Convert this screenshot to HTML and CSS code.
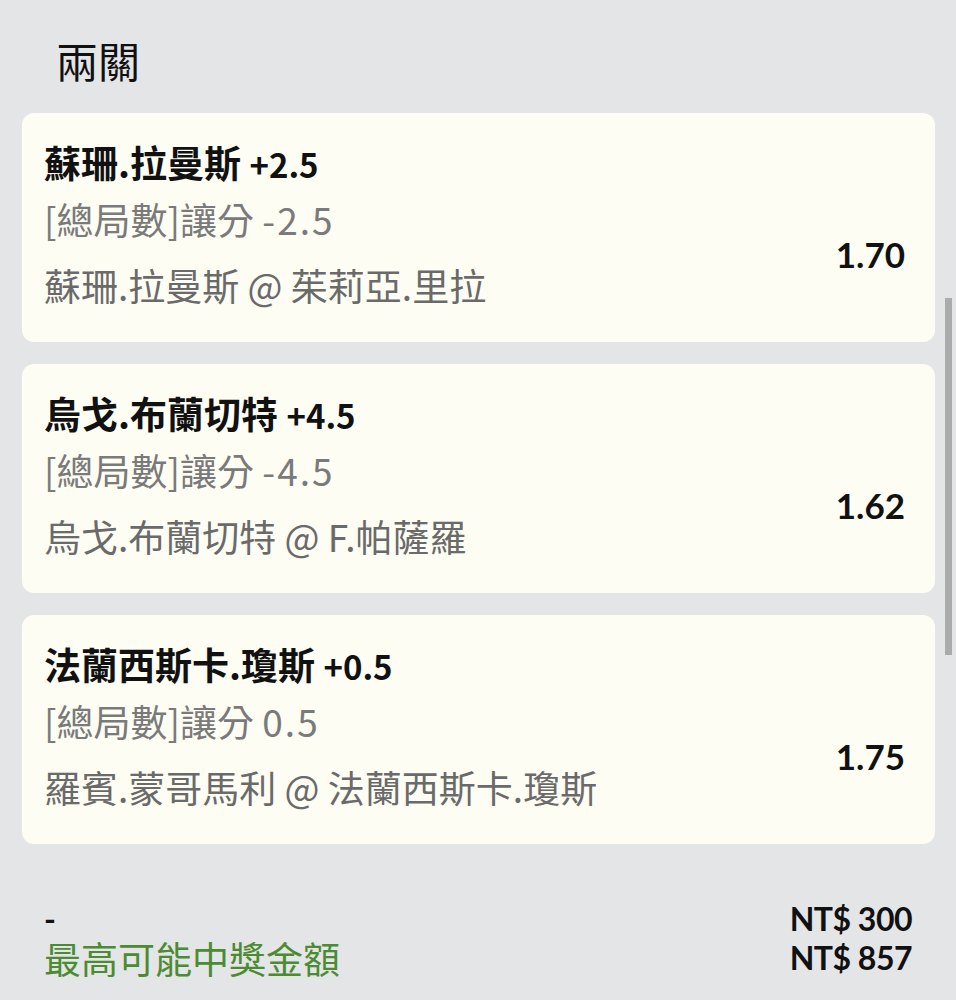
FILE: index.html
```html
<!DOCTYPE html>
<html lang="zh-Hant">
<head>
    <meta charset="UTF-8">
    <meta name="viewport" content="width=device-width, initial-scale=1.0">
    <link rel="stylesheet" href="styles.css">
    <title>兩關</title>
</head>
<body>
    <div class="page">
        <h1 class="page-title">兩關</h1>

        <div class="bet-list">
            <div class="bet-card">
                <div class="bet-info">
                    <div class="bet-pick">蘇珊.拉曼斯 <span class="line">+2.5</span></div>
                    <div class="bet-market">[總局數]讓分 <span class="line">-2.5</span></div>
                    <div class="bet-match">蘇珊.拉曼斯 @ 茱莉亞.里拉</div>
                </div>
                <div class="bet-odds">1.70</div>
            </div>
            <div class="bet-card">
                <div class="bet-info">
                    <div class="bet-pick">烏戈.布蘭切特 <span class="line">+4.5</span></div>
                    <div class="bet-market">[總局數]讓分 <span class="line">-4.5</span></div>
                    <div class="bet-match">烏戈.布蘭切特 @ F.帕薩羅</div>
                </div>
                <div class="bet-odds">1.62</div>
            </div>
            <div class="bet-card">
                <div class="bet-info">
                    <div class="bet-pick">法蘭西斯卡.瓊斯 <span class="line">+0.5</span></div>
                    <div class="bet-market">[總局數]讓分 <span class="line">0.5</span></div>
                    <div class="bet-match">羅賓.蒙哥馬利 @ 法蘭西斯卡.瓊斯</div>
                </div>
                <div class="bet-odds">1.75</div>
            </div>
        </div>

        <div class="summary">
            <div class="summary-row">
                <span class="summary-label">-</span>
                <span class="summary-value">NT$ 300</span>
            </div>
            <div class="summary-row">
                <span class="summary-label payout">最高可能中獎金額</span>
                <span class="summary-value">NT$ 857</span>
            </div>
        </div>
    </div>

    <div class="scroll-thumb"></div>
</body>
</html>
```

FILE: styles.css
```css
body {
    font-family: Lato, "Noto Sans CJK TC", sans-serif;
    margin: 0;
    background-color: #e4e5e7;
    color: #111;
}

.page {
    padding: 30px 21px 0 22px;
}

.page-title {
    margin: 0 0 23px 0;
    padding-left: 34px;
    font-family: "Noto Sans CJK TC", sans-serif;
    font-size: 42px;
    font-weight: 400;
    line-height: 60px;
}

.bet-list {
    display: flex;
    flex-direction: column;
    gap: 22px;
}

.bet-card {
    display: flex;
    align-items: center;
    justify-content: space-between;
    height: 229px;
    box-sizing: border-box;
    padding: 22px 30px 30px 22px;
    background-color: #fdfdf4;
    border-radius: 12px;
}

.bet-info {
    display: flex;
    flex-direction: column;
    font-family: "Noto Sans CJK TC", sans-serif;
    font-size: 37px;
    line-height: 55px;
}

.bet-pick {
    font-weight: 700;
}

.bet-pick .line {
    font-size: 33px;
}

.bet-market {
    color: #7a7a7a;
}

.bet-market .line {
    letter-spacing: 2px;
}

.bet-match {
    margin-top: 11px;
    color: #6a6a6a;
}

.bet-odds {
    margin-top: 60px;
    font-size: 35px;
    font-weight: 700;
}

.summary {
    padding: 55px 23px 0 22px;
}

.summary-row {
    display: flex;
    justify-content: space-between;
    align-items: center;
    height: 39px;
}

.summary-label {
    font-size: 32px;
    font-weight: 700;
}

.summary-label.payout {
    font-size: 37px;
    font-weight: 400;
    color: #4b8b32;
}

.summary-value {
    font-size: 32px;
    font-weight: 700;
    letter-spacing: -0.5px;
}

.scroll-thumb {
    position: absolute;
    top: 298px;
    right: 4px;
    width: 7px;
    height: 357px;
    background-color: #ababab;
}
```
